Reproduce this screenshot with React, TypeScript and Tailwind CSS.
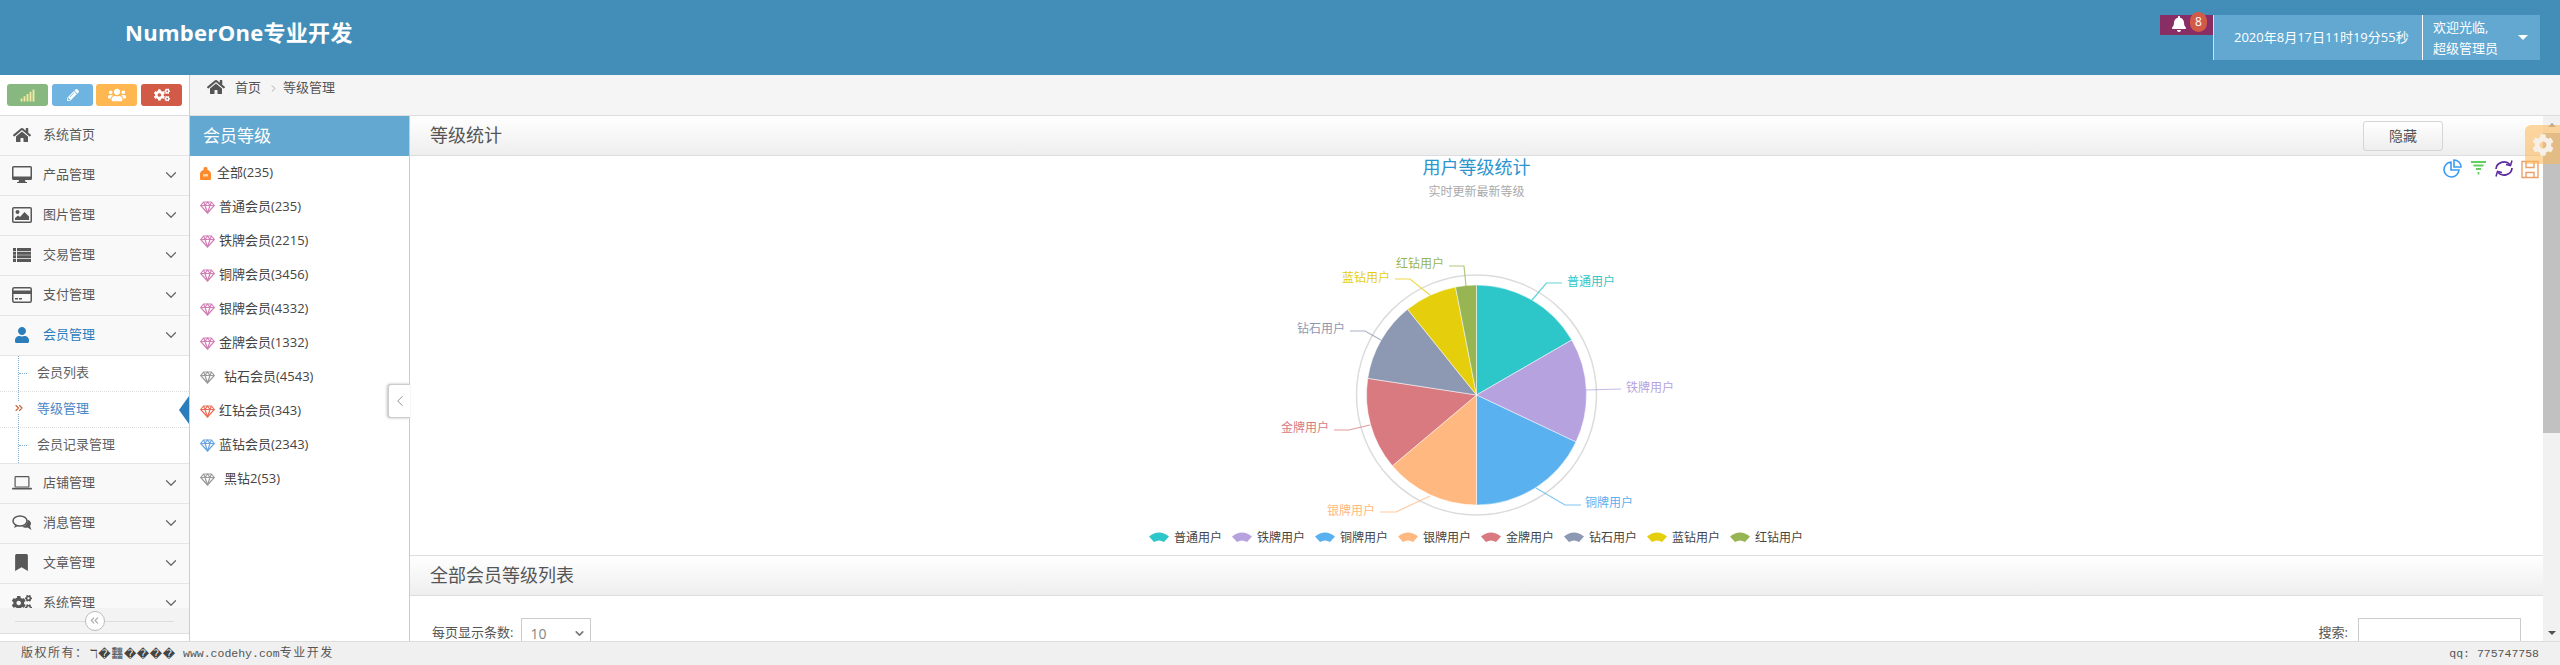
import React from "react";
import { FaHome, FaUser, FaBookmark, FaCogs, FaSignal, FaPencilAlt, FaUsers, FaBell, FaCog } from "react-icons/fa";
import { ChevronDown, ChevronLeft, ChevronRight, ChevronsLeft, ChevronsRight } from "lucide-react";

const Desktop = () => (
  <svg width="20" height="18" viewBox="0 0 20 18"><path fill="#585858" d="M1.5 0h17A1.5 1.5 0 0 1 20 1.5v11a1.5 1.5 0 0 1-1.5 1.5H13l.5 2h1.5v1H5v-1h1.5L7 14H1.5A1.5 1.5 0 0 1 0 12.500v-11A1.500 1.500 0 0 1 1.500 0zM1.500 1.500v9h17v-9z" /></svg>
);
const Picture = () => (
  <svg width="20" height="16" viewBox="0 0 20 16"><rect x=".75" y=".75" width="18.500" height="14.500" rx="1" fill="none" stroke="#585858" strokeWidth="1.500" /><circle cx="5.500" cy="5" r="2" fill="#585858" /><path fill="#585858" d="M3 13v-2l3-2.500 2 1.500 4.500-5L17 9.500V13z" /></svg>
);
const Rows = () => (
  <svg width="18" height="14" viewBox="0 0 18 14" fill="#585858">
    <path d="M0 0h3v3H0zM4 0h14v3H4zM0 3.670h3v3H0zM4 3.670h14v3H4zM0 7.330h3v3H0zM4 7.330h14v3H4zM0 11h3v3H0zM4 11h14v3H4z" />
  </svg>
);
const Card = () => (
  <svg width="20" height="16" viewBox="0 0 20 16"><rect x=".75" y=".75" width="18.500" height="14.500" rx="1.500" fill="none" stroke="#585858" strokeWidth="1.500" /><rect x="1" y="3.500" width="18" height="3.500" fill="#585858" /><rect x="3" y="11" width="3" height="1.500" fill="#585858" /><rect x="7" y="11" width="3" height="1.500" fill="#585858" /></svg>
);
const Laptop = () => (
  <svg width="20" height="14" viewBox="0 0 20 14"><rect x="3.100" y=".6" width="13.800" height="10.400" rx=".8" fill="none" stroke="#585858" strokeWidth="1.200" /><rect x="0" y="11.800" width="20" height="1.800" rx=".9" fill="#585858" /></svg>
);
const Comments = () => (
  <svg width="20" height="16" viewBox="0 0 20 16"><ellipse cx="8" cy="6" rx="7" ry="5" fill="none" stroke="#585858" strokeWidth="1.500" /><path fill="#585858" d="M3.500 9.500 2 13l4-2zM15.500 4.500C19 6 20 9 18 11l1.500 4-4-2.500c-2 .5-4 .2-5.500-1 3 0 6-2 5.500-7.500z" /></svg>
);

const menuTop: [React.ReactNode, string][] = [
  [<FaHome size={18} color="#585858" />, "系统首页"],
  [<Desktop />, "产品管理"],
  [<Picture />, "图片管理"],
  [<Rows />, "交易管理"],
  [<Card />, "支付管理"],
];
const menuBottom: [React.ReactNode, string][] = [
  [<Laptop />, "店铺管理"],
  [<Comments />, "消息管理"],
  [<FaBookmark size={17} color="#585858" />, "文章管理"],
  [<FaCogs size={20} color="#585858" />, "系统管理"],
];

function MenuRow({ icon, label, active, arrow = true }: { icon: React.ReactNode; label: string; active?: boolean; arrow?: boolean }) {
  return (
    <div className="flex h-[40px] shrink-0 items-center border-b border-[#e5e5e5] bg-[#f9f9f9] pb-[2px]">
      <div className="flex w-[43px] shrink-0 justify-center">{icon}</div>
      <span className={active ? "text-[13px] text-[#2b7dbc]" : "text-[13px] text-[#585858]"}>{label}</span>
      {arrow && <ChevronDown size={18} strokeWidth={1.600} color="#666" className="ml-auto mr-[9px]" />}
    </div>
  );
}

function Diamond({ color }: { color: string }) {
  return (
    <svg width="15" height="13" viewBox="0 0 15 13" className="shrink-0">
      <g fill="none" stroke={color} strokeWidth="1.200" strokeLinejoin="round">
        <path d="M3.500 1h8L14.300 4.500 7.500 12 .7 4.500z" />
        <path d="M.7 4.500h13.600M5 4.500 7.500 12 10 4.500M3.500 1 5 4.500 7.500 1 10 4.500 11.500 1" />
      </g>
    </svg>
  );
}

const levels: [string, string, number][] = [
  ["普通会员(235)", "#d27fb5", 4],
  ["铁牌会员(2215)", "#d27fb5", 4],
  ["铜牌会员(3456)", "#d27fb5", 4],
  ["银牌会员(4332)", "#d27fb5", 4],
  ["金牌会员(1332)", "#d27fb5", 4],
  ["钻石会员(4543)", "#9b9b9b", 9],
  ["红钻会员(343)", "#ea6f5a", 4],
  ["蓝钻会员(2343)", "#6aa5dd", 4],
  ["黑钻2(53)", "#9b9b9b", 9],
];

const CX = 1476.5;
const CY = 395;
const R = 110;
const slices: [string, number, number][] = [
  ["#2ec7c9", 0, 60],
  ["#b6a2de", 60, 115.300],
  ["#5ab1ef", 115.300, 180],
  ["#ffb980", 180, 229.900],
  ["#d87a80", 229.900, 278.700],
  ["#8d98b3", 278.700, 321.200],
  ["#e5cf0d", 321.200, 349],
  ["#97b552", 349, 360],
];
function pt(a: number) {
  const r = (a * Math.PI) / 180;
  return `${CX + R * Math.sin(r)} ${CY - R * Math.cos(r)}`;
}
const labels: [string, string, string, number, number][] = [
  ["普通用户", "#2ec7c9", "1532,300 1546.500,283 1562,283", 1567, 282],
  ["铁牌用户", "#b6a2de", "1586,390 1621,389", 1626, 388],
  ["铜牌用户", "#5ab1ef", "1536,488 1565,505 1581,505", 1585, 503],
  ["银牌用户", "#ffb980", "1430,496 1396,512 1380,512", 1327, 511],
  ["金牌用户", "#d87a80", "1370,425 1349,430 1334,430", 1281, 428],
  ["钻石用户", "#8d98b3", "1381,340 1365,331 1350,331", 1297, 329],
  ["蓝钻用户", "#e5cf0d", "1430,295 1410,279 1395,279", 1342, 278],
  ["红钻用户", "#97b552", "1466,286 1464,266 1449,266", 1396, 264],
];
const legend: [string, string][] = [
  ["普通用户", "#2ec7c9"],
  ["铁牌用户", "#b6a2de"],
  ["铜牌用户", "#5ab1ef"],
  ["银牌用户", "#ffb980"],
  ["金牌用户", "#d87a80"],
  ["钻石用户", "#8d98b3"],
  ["蓝钻用户", "#e5cf0d"],
  ["红钻用户", "#97b552"],
];

function Chart() {
  return (
    <svg width="2133" height="399" viewBox="410 156 2133 399" className="block shrink-0">
      <text x={CX} y="174" textAnchor="middle" fontSize="18" fill="#2b95d0">用户等级统计</text>
      <text x={CX} y="196" textAnchor="middle" fontSize="12" fill="#aaa">实时更新最新等级</text>
      <circle cx={CX} cy={CY} r="120" fill="none" stroke="#dcdcdc" strokeWidth="1.500" />
      {slices.map(([c, a, b]) => (
        <path key={c} d={`M${CX} ${CY}L${pt(a)}A${R} ${R} 0 ${b - a > 180 ? 1 : 0} 1 ${pt(b)}Z`} fill={c} stroke="#fff" strokeWidth=".5" />
      ))}
      {labels.map(([t, c, p, x, y]) => (
        <g key={t}>
          <polyline points={p} fill="none" stroke={c} strokeOpacity=".75" strokeWidth="1.200" />
          <text x={x} y={y + 4} fontSize="12" fill={c}>{t}</text>
        </g>
      ))}
      {legend.map(([t, c], i) => (
        <g key={t} transform={`translate(${1149 + i * 83} 532)`}>
          <path d="M0 4.500Q10 -3.500 20 4.500L15 10Q10 7 5 10Z" fill={c} />
          <text x="25" y="9.500" fontSize="12" fill="#444">{t}</text>
        </g>
      ))}
      <g fill="none" strokeWidth="1.600">
        <path d="M2451 162a7.500 7.500 0 1 0 8 8h-8z" stroke="#3b9bf5" />
        <path d="M2454 160v7h7a7 7 0 0 0-7-7z" stroke="#3b9bf5" />
        <path d="M2471 162h15M2473.500 165.500h10M2476 169h5" stroke="#62cf5a" strokeWidth="2" />
        <path d="M2478.500 172v2.500" stroke="#62cf5a" strokeWidth="1.800" />
        <path d="M2496 169a8 7.500 0 0 1 14-4.500M2512 168a8 7.500 0 0 1-14 4.500" stroke="#5a2a9c" strokeWidth="1.700" />
        <path d="M2512 160.500l-1.500 5-4.500-1M2496 176.500l1.500-5 4.500 1" stroke="#5a2a9c" strokeWidth="1.500" />
        <path d="M2522 161.500h16v16h-16zM2526 161.500v6h8v-6M2526 177.500v-5h8v5" stroke="#eba06a" strokeWidth="1.400" />
      </g>
    </svg>
  );
}

function PanelHead({ title, children }: { title: string; children?: React.ReactNode }) {
  return (
    <div className="flex h-[40px] shrink-0 items-center justify-between border-b border-[#ddd] bg-gradient-to-b from-white to-[#eeeeee] pl-[20px]">
      <span className="text-[18px] text-[#555]">{title}</span>
      {children}
    </div>
  );
}

export default function App() {
  return (
    <div className="relative flex h-[665px] w-[2560px] flex-col overflow-hidden bg-white [font-family:'Open_Sans','Noto_Sans_CJK_SC',sans-serif]">
      <header className="flex h-[75px] shrink-0 justify-between bg-[#438eb9] pr-[20px]">
        <div className="pl-[125px] pt-[13px] text-[22px] font-bold leading-[38px] tracking-[0.3px] text-white">NumberOne专业开发</div>
        <div className="mt-[15px] flex h-[45px] text-white">
          <div className="relative h-[20px] w-[53px] bg-[#892e65] pl-[11px]">
            <FaBell size={16} className="mt-[1px]" />
            <span className="absolute left-[30px] top-[-3px] flex h-[20px] w-[17px] items-center justify-center rounded-[9px] bg-[#d15b47] text-[12px]">8</span>
          </div>
          <div className="flex w-[209px] items-center border-l border-[#ddd] bg-[#62a8d1] pl-[20px] text-[13px]">2020年8月17日11时19分55秒</div>
          <div className="flex w-[118px] items-center justify-between border-l border-[#fff] bg-[#62a8d1] pl-[10px] pr-[12px] text-[13px] leading-[21px]">
            <div>欢迎光临,<br />超级管理员</div>
            <div className="h-0 w-0 border-x-[5px] border-t-[5px] border-x-transparent border-t-white" />
          </div>
        </div>
      </header>

      <div className="flex min-h-0 flex-1">
        <aside className="flex w-[190px] shrink-0 flex-col border-r border-[#ccc] bg-white">
          <div className="flex h-[41px] shrink-0 items-start border-b border-[#ddd] pl-[7px] pt-[9px]">
            <div className="flex h-[22px] w-[41px] items-center justify-center rounded-[3px] bg-[#87b87f]"><FaSignal size={15} color="#f4e9a0" /></div>
            <div className="ml-[4px] flex h-[22px] w-[41px] items-center justify-center rounded-[3px] bg-[#6fb3e0]"><FaPencilAlt size={12} color="#fff" /></div>
            <div className="ml-[3px] flex h-[22px] w-[41px] items-center justify-center rounded-[3px] bg-[#ffb752]"><FaUsers size={18} color="#fff" /></div>
            <div className="ml-[4px] flex h-[22px] w-[41px] items-center justify-center rounded-[3px] bg-[#d15b47]"><FaCogs size={16} color="#fff" /></div>
          </div>
          <nav className="flex min-h-0 flex-1 flex-col overflow-hidden">
            {menuTop.map(([ic, t], i) => <MenuRow key={t} icon={ic} label={t} arrow={i > 0} />)}
            <MenuRow icon={<FaUser size={16} color="#2b7dbc" />} label="会员管理" active />
            <div className="relative shrink-0 bg-white">
              <div className="absolute bottom-[1px] left-[18px] top-0 border-l border-dotted border-[#7fb0d8]" />
              <div className="flex h-[36px] items-center border-b border-dotted border-[#ddd] pb-[2px] pl-[37px] text-[13px] text-[#616161]">
                <span className="absolute left-[19px] top-[17px] w-[8px] border-t border-dotted border-[#7fb0d8]" />会员列表
              </div>
              <div className="relative flex h-[36px] items-center border-b border-dotted border-[#ddd] pb-[2px] pl-[37px] text-[13px] text-[#4b88c4]">
                <span className="absolute left-[13px] top-[10px] flex bg-white"><ChevronsRight size={12} strokeWidth={2.200} color="#c86139" /></span>等级管理
                <div className="absolute right-0 top-[4px] h-0 w-0 border-y-[14px] border-r-[10px] border-y-transparent border-r-[#2b7dbc]" />
              </div>
              <div className="flex h-[36px] items-center border-b border-[#e5e5e5] pb-[2px] pl-[37px] text-[13px] text-[#616161]">
                <span className="absolute left-[19px] top-[89px] w-[8px] border-t border-dotted border-[#7fb0d8]" />会员记录管理
              </div>
            </div>
            {menuBottom.map(([ic, t]) => <MenuRow key={t} icon={ic} label={t} />)}
          </nav>
          <div className="relative flex h-[26px] shrink-0 items-center justify-center border-b border-[#e0e0e0] bg-[#f3f3f3]">
            <div className="absolute left-[15px] right-[15px] top-[13px] border-t border-[#ddd]" />
            <div className="relative flex h-[20px] w-[20px] items-center justify-center rounded-full border border-[#bbb] bg-white"><ChevronsLeft size={13} color="#aaa" /></div>
          </div>
          <div className="h-[7px] shrink-0" />
        </aside>

        <div className="flex min-w-0 flex-1 flex-col">
          <div className="flex h-[41px] shrink-0 items-start border-b border-[#ddd] bg-[#f5f5f5] pl-[17px] pt-[3px] text-[13px] text-[#555]">
            <FaHome size={18} color="#555" />
            <span className="ml-[10px] leading-[18px]">首页</span>
            <ChevronRight size={11} color="#aaa" className="ml-[7px] mt-[5px]" />
            <span className="ml-[4px] leading-[18px]">等级管理</span>
          </div>
          <div className="flex min-h-0 flex-1">
            <section className="relative w-[220px] shrink-0 border-r border-[#ccc] bg-white">
              <div className="flex h-[40px] items-center bg-[#62a8d1] pl-[13px] text-[17px] text-white">会员等级</div>
              <div className="flex h-[34px] items-center pl-[10px] text-[13px] text-[#444]">
                <svg width="11" height="13" viewBox="0 0 11 13" className="shrink-0"><path fill="#ff8a2d" d="M3.500 3V1.500C3.500.5 4.500 0 5.500 0s2 .5 2 1.500V3C9.500 3.500 11 5 11 7v5a1 1 0 0 1-1 1H1a1 1 0 0 1-1-1V7c0-2 1.500-3.500 3.500-4z" /><path fill="#ffd6a8" d="M3 7h5v2.500H3z" /></svg>
                <span className="ml-[6px]">全部(235)</span>
              </div>
              {levels.map(([t, c, g]) => (
                <div key={t} className="flex h-[34px] items-center pl-[10px] text-[13px] text-[#444]">
                  <Diamond color={c} />
                  <span style={{ marginLeft: g }}>{t}</span>
                </div>
              ))}
              <div className="absolute right-[-1px] top-[268px] flex h-[34px] w-[22px] items-center justify-center rounded-l-[3px] border-y border-l border-[#ccc] bg-white shadow-[-1px_0_3px_#bbb]">
                <ChevronLeft size={18} strokeWidth={1.200} color="#888" />
              </div>
            </section>

            <main className="flex min-w-0 flex-1 flex-col overflow-hidden">
              <PanelHead title="等级统计">
                <button className="mr-[100px] flex h-[30px] w-[80px] items-center justify-center rounded-[3px] border border-[#d5d5d5] bg-gradient-to-b from-white to-[#eeeeee] text-[14px] text-[#555]">隐藏</button>
              </PanelHead>
              <Chart />
              <div className="border-t border-[#ddd]"><PanelHead title="全部会员等级列表" /></div>
              <div className="flex justify-between pl-[22px] pr-[22px] pt-[22px] text-[13px] text-[#555]">
                <div className="flex items-start">
                  <span className="mt-[5px]">每页显示条数:</span>
                  <div className="ml-[8px] flex h-[30px] w-[70px] items-center justify-between border border-[#ccc] pl-[8px] pr-[4px] text-[14px] text-[#858585]">10<ChevronDown size={13} strokeWidth={3} color="#777" /></div>
                </div>
                <div className="flex items-start">
                  <span className="mt-[5px]">搜索:</span>
                  <div className="ml-[10px] h-[30px] w-[163px] border border-[#ccc]" />
                </div>
              </div>
            </main>

            <div className="flex w-[17px] shrink-0 flex-col bg-[#f1f1f1]">
              <div className="flex h-[17px] items-center justify-center"><div className="h-0 w-0 border-x-[4px] border-b-[4px] border-x-transparent border-b-[#a3a3a3]" /></div>
              <div className="h-[300px] bg-[#c1c1c1]" />
              <div className="flex-1" />
              <div className="flex h-[17px] items-center justify-center"><div className="h-0 w-0 border-x-[4px] border-t-[4px] border-x-transparent border-t-[#505050]" /></div>
            </div>
          </div>
        </div>
      </div>

      <footer className="flex h-[24px] shrink-0 items-center justify-between border-t border-[#ddd] bg-[#f0f0f0] pl-[21px] pr-[21px] text-[12px] text-[#555] [font-family:'Liberation_Mono','Noto_Sans_CJK_SC',monospace]">
        <div className="flex items-center whitespace-pre">
          <span className="w-[69px] tracking-[1.500px]">版权所有：</span>
          <span className="flex w-[85px] justify-between text-[#444] [font-family:'DejaVu_Sans','Noto_Sans_CJK_SC',sans-serif]">
            <span>ℸ</span><span>�</span><span>䨻</span><span>�</span><span>�</span><span>�</span><span>�</span>
          </span>
          <span className="ml-[8px] text-[11.500px]">www.codehy.com</span>
          <span className="tracking-[1.500px]">专业开发</span>
        </div>
        <span className="text-[11.500px]">qq: 775747758</span>
      </footer>

      <div className="absolute right-0 top-[125px] flex h-[39px] w-[35px] items-center justify-center rounded-tl-[6px] bg-[#ffb752]/55">
        <FaCog size={22} color="#f6f0e8" />
      </div>
    </div>
  );
}
